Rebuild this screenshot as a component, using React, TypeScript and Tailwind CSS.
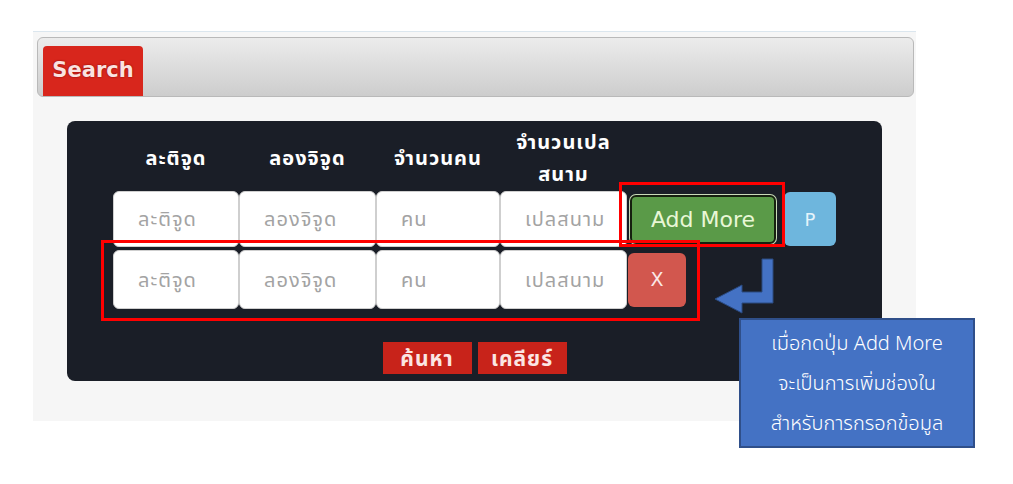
import React from 'react';

const thai = { fontFamily: '"Noto Sans", "Noto Sans Thai", "Tahoma", sans-serif' };
const verdana = { fontFamily: '"DejaVu Sans", Verdana, sans-serif' };

const labels = ['ละติจูด', 'ลองจิจูด', 'จำนวนคน'];
const placeholders = ['ละติจูด', 'ลองจิจูด', 'คน', 'เปลสนาม'];
const widths = ['w-[126px]', 'w-[137px]', 'w-[124px]', 'w-[127px]'];

const InputRow: React.FC<{ height: string }> = ({ height }) => (
  <div className="flex">
    {placeholders.map((p, i) => (
      <div
        key={i}
        className={`${widths[i]} ${height} bg-white rounded-md border border-[#cfcfcf] flex items-center pl-[24px] text-[20px] tracking-[1px] text-[#a3a3a3]`}
      >
        {p}
      </div>
    ))}
  </div>
);

const App: React.FC = () => {
  return (
    <div className="relative w-[1013px] h-[484px] bg-white overflow-hidden" style={thai}>
      {/* screenshot frame */}
      <div className="ml-[33px] mt-[31px] w-[883px] h-[390px] bg-[#f6f6f6] border-t border-[#dbe6ee] pt-[5px] pl-[4px]">
        <div className="w-[877px] h-[60px] rounded-md border border-[#b9b9b9] bg-gradient-to-b from-[#ececec] to-[#cdcdcd] pl-[5px] pt-[8px]">
          <div className="w-[100px] h-[50px] bg-[#d8261c] rounded-t-sm flex items-center justify-center text-[21px] font-bold text-[#fbe3e0] [text-shadow:0_0_2px_#7a0000]" style={verdana}>
            Search
          </div>
        </div>

        {/* dark panel */}
        <div className="ml-[30px] mt-[24px] w-[815px] h-[260px] rounded-lg bg-[#1a1e27] pl-[46px] pt-[4px]">
          <div className="flex h-[66px] items-center text-white font-bold text-[20px] tracking-[1px] text-center leading-[32px]">
            {labels.map((l, i) => (
              <div key={i} className={widths[i]}>{l}</div>
            ))}
            <div className={widths[3]}>จำนวนเปล<br />สนาม</div>
          </div>

          <div className="flex items-center">
            <InputRow height="h-[56px]" />
            <button className="ml-[3px] w-[146px] h-[49px] rounded-md bg-[#5a9a48] border-2 border-[#16200f] ring-1 ring-[#c9dbb8] text-[22px] text-[#e9f7d6]" style={verdana}>
              Add More
            </button>
            <button className="ml-[8px] w-[52px] h-[54px] rounded-md bg-[#6eb6dd] text-[#e6f4fb] text-[18px]" style={verdana}>
              P
            </button>
          </div>

          <div className="flex items-center mt-[3px]">
            <InputRow height="h-[59px]" />
            <button className="ml-[1px] w-[58px] h-[54px] rounded-md bg-[#d2574e] text-[#fbe9e7] text-[19px]" style={verdana}>
              X
            </button>
          </div>

          <div className="flex justify-center gap-[6px] mt-[33px] -ml-[46px]">
            <button className="w-[89px] h-[32px] bg-[#c8231a] text-[#fbe6e3] font-bold text-[21px] tracking-[1px] leading-none">ค้นหา</button>
            <button className="w-[89px] h-[32px] bg-[#c8231a] text-[#fbe6e3] font-bold text-[21px] tracking-[1px] leading-none">เคลียร์</button>
          </div>
        </div>
      </div>

      {/* annotations */}
      <div className="absolute left-[619px] top-[182px] w-[166px] h-[65px] border-[3px] border-[#ff0000]" />
      <div className="absolute left-[101px] top-[240px] w-[599px] h-[81px] border-[3px] border-[#ff0000]" />

      <svg className="absolute left-[710px] top-[255px]" width="70" height="65" viewBox="0 0 70 65">
        <path d="M52 4 H63 V48 H32 V58 L5 44 L32 30 V37 H52 Z" fill="#4472c4" stroke="#2a4a80" strokeWidth="1" />
      </svg>

      <div className="absolute left-[739px] top-[318px] w-[236px] h-[130px] bg-[#4472c4] border-2 border-[#2f4f8a] flex flex-col items-center justify-center text-white text-[20px] font-light leading-[40px]">
        <div>เมื่อกดปุ่ม Add More</div>
        <div>จะเป็นการเพิ่มช่องใน</div>
        <div>สำหรับการกรอกข้อมูล</div>
      </div>
    </div>
  );
};

export default App;
